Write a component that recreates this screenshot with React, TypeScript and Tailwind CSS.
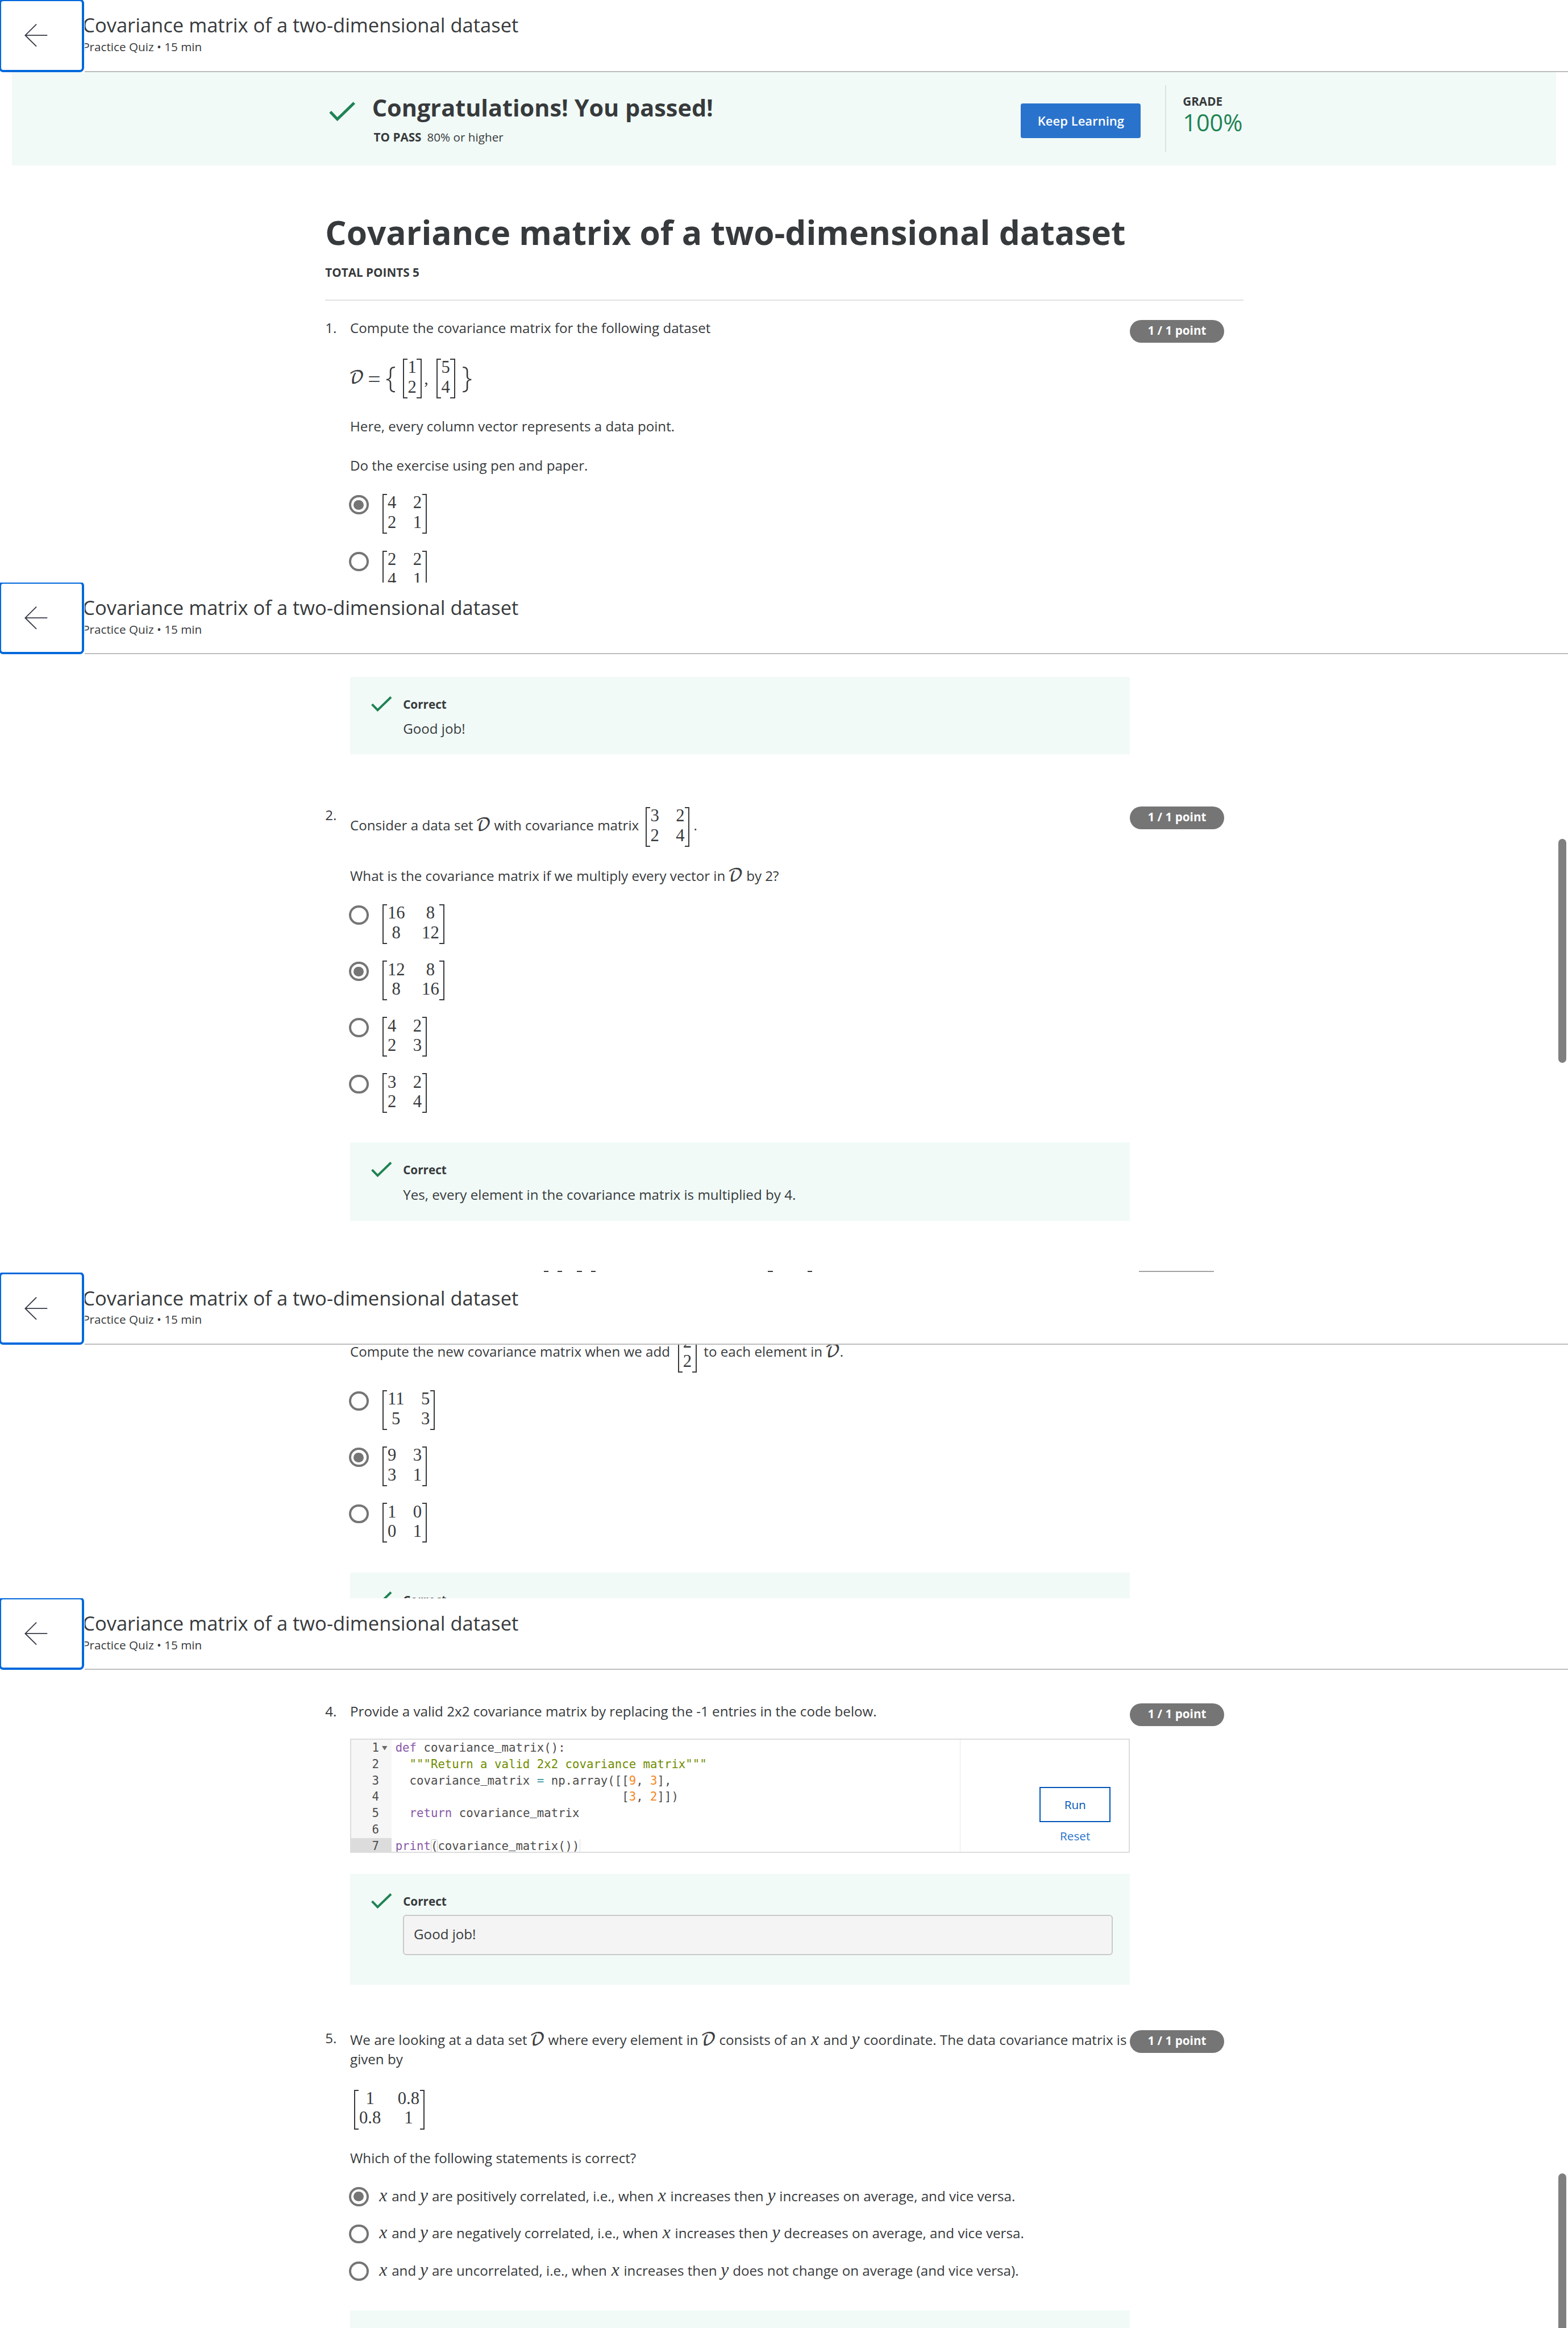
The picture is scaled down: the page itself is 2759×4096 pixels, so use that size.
import type { ReactNode } from "react";

const TITLE = "Covariance matrix of a two-dimensional dataset";

function CheckIcon({ className }: { className: string }) {
  return (
    <svg className={className} viewBox="0 0 48 36" fill="none" stroke="#1f8354" strokeWidth="5.2">
      <path d="M2 18.5 15 32 46 2" />
    </svg>
  );
}

function Header() {
  return (
    <header className="relative z-10 flex h-[66px] w-full bg-white">
      <div className="z-10 h-[66px] w-[77.8px] shrink-0 overflow-hidden bg-white">
        <button className="-ml-px -mt-px flex h-[67px] w-[78px] items-center rounded-[4px] border-[2.1px] border-[#0068dc] pl-[21.5px]">
          <svg className="h-[21px] w-[21px]" viewBox="0 0 42 42" fill="none" stroke="#373a46" strokeWidth="2">
            <path d="M1 21H42M22 .7 1.5 21 22 41.3" />
          </svg>
        </button>
      </div>
      <div className="-ml-[0.8px] flex-1 border-b-[1.1px] border-[#bdbdbd]">
        <div className="-ml-[1.3px] pt-[11.2px]">
          <h2 className="text-[18.02px] leading-[24px]">{TITLE}</h2>
          <p className="-mt-[0.3px] text-[10.8px] leading-[16px]">Practice Quiz • 15 min</p>
        </div>
      </div>
    </header>
  );
}

function Brackets({ children, className = "" }: { children?: ReactNode; className?: string }) {
  return (
    <span className={`flex h-[36.5px] shrink-0 ${className}`}>
      <span className="h-full w-[4.3px] border-y-[1.1px] border-l-[1.1px] border-[#373a3c]" />
      <span className="mx-[0.3px] -mt-[0.9px] block">{children}</span>
      <span className="h-full w-[4.3px] border-y-[1.1px] border-r-[1.1px] border-[#373a3c]" />
    </span>
  );
}

function Matrix({ rows, className = "" }: { rows: string[][]; className?: string }) {
  const single = rows[0].length === 1;
  return (
    <Brackets className={className}>
      <span
        className={`grid gap-x-[15.4px] text-center font-['Liberation_Serif',serif] text-[16px] leading-[18px] ${
          single ? "grid-cols-[auto]" : "grid-cols-[auto_auto]"
        }`}
      >
        {rows.flat().map((v, i) => (
          <span key={i}>{v}</span>
        ))}
      </span>
    </Brackets>
  );
}

function SetD() {
  return (
    <span className="inline-block w-[12.7px] font-['DejaVu_Math_TeX_Gyre','Liberation_Serif',serif] text-[15.2px] leading-[18px] [-webkit-text-stroke:0.25px_#373a3c] [text-indent:-1px]">
      𝒟
    </span>
  );
}

function X() {
  return (
    <span className="inline-block w-[8.9px] text-center font-['Liberation_Serif',serif] text-[16.5px] italic leading-[18px]">x</span>
  );
}

function Y() {
  return (
    <span className="inline-block w-[7.9px] text-center font-['Liberation_Serif',serif] text-[16.5px] italic leading-[18px]">y</span>
  );
}

function Brace({ children, className }: { children: string; className: string }) {
  return (
    <span className={`-mt-[3px] flex w-[12px] justify-center font-['Open_Sans',sans-serif] text-[27px] font-light leading-[28px] ${className}`}>
      {children}
    </span>
  );
}

function Radio({ checked = false, className = "" }: { checked?: boolean; className?: string }) {
  return (
    <span
      className={`-ml-[1.2px] flex h-[17.7px] w-[18.5px] shrink-0 items-center justify-center rounded-full border-[2.1px] border-[#757575] ${className}`}
    >
      {checked && <span className="h-[9px] w-[9.4px] rounded-full bg-[#757575]" />}
    </span>
  );
}

function MatrixOption({ rows, checked }: { rows: string[][]; checked?: boolean }) {
  return (
    <div className="flex h-[36.5px]">
      <Radio checked={checked} className="mt-[1.1px]" />
      <Matrix rows={rows} className="ml-[12.5px]" />
    </div>
  );
}

function TextOption({ children, checked }: { children: ReactNode; checked?: boolean }) {
  return (
    <div className="flex h-5">
      <Radio checked={checked} className="mt-[1.7px]" />
      <Line className="ml-[8.7px]">{children}</Line>
    </div>
  );
}

function Line({ children, className = "" }: { children: ReactNode; className?: string }) {
  return <div className={`flex h-5 items-baseline whitespace-pre leading-5 ${className}`}>{children}</div>;
}

function Feedback({ children, className = "" }: { children?: ReactNode; className?: string }) {
  return (
    <div className={`flex bg-[#f1faf7] pt-[17.3px] ${className}`}>
      <CheckIcon className="ml-[19.3px] mt-[0.3px] h-[14.3px] w-[19.1px] shrink-0" />
      <div className="ml-[10.2px] flex-1">
        <p className="text-[10.8px] font-bold leading-[16px]">Correct</p>
        {children}
      </div>
    </div>
  );
}

function Question({ n, children, className = "" }: { n?: number; children: ReactNode; className?: string }) {
  return (
    <section className={`ml-[298.5px] flex items-start ${className}`}>
      <span className="w-[22.8px] leading-5">{n ? `${n}.` : ""}</span>
      <div className="w-[715.7px]">{children}</div>
      {n && (
        <span className="mt-[2.3px] h-[21px] w-[86.3px] rounded-full bg-[#757575] text-center text-[10.8px] font-bold leading-[19.8px] text-white">
          1 / 1 point
        </span>
      )}
    </section>
  );
}

function Banner() {
  return (
    <div className="mx-[11px] flex h-[86px] bg-[#f1faf7]">
      <CheckIcon className="ml-[291.2px] mt-[27.2px] h-[18px] w-[24.2px]" />
      <div className="ml-[15.1px] w-[595.5px] pt-[19px]">
        <h3 className="text-[21.6px] font-bold leading-[28px]">Congratulations! You passed!</h3>
        <p className="ml-[1.5px] mt-[5px] flex gap-[5.2px] text-[10.8px] leading-[16px]">
          <b>TO PASS</b>
          <span>80% or higher</span>
        </p>
      </div>
      <button className="mt-[29px] h-8 w-[110px] rounded-[2px] bg-[#2a73cc] text-[11.5px] font-semibold text-white">
        Keep Learning
      </button>
      <div className="ml-[22px] mt-[12px] h-[62px] w-[1.04px] bg-[#dfe3e1]" />
      <div className="ml-[15.5px] pt-[18.8px]">
        <p className="text-[10.8px] font-bold leading-[16px]">GRADE</p>
        <p className="text-[21.6px] leading-[23.4px] text-[#1f8354]">100%</p>
      </div>
    </div>
  );
}

/* The underscore of this face sits closer to the baseline, so the last line's stays inside the editor. */
function Name() {
  return (
    <>
      covariance<span className="font-['Liberation_Mono',monospace] leading-[0px]">_</span>matrix
    </>
  );
}

function Code() {
  const kw = "text-[#8959a8]";
  const num = "text-[#f5871f]";
  const lines: ReactNode[] = [
    <>
      <span className={kw}>def</span> <Name />():
    </>,
    <span className="text-[#718c00]">{'  """Return a valid 2x2 covariance matrix"""'}</span>,
    <>
      {"  "}
      <Name /> <span className="text-[#3e999f]">=</span> np.array([[<span className={num}>9</span>,{" "}
      <span className={num}>3</span>],
    </>,
    <>
      {" ".repeat(32)}[<span className={num}>3</span>, <span className={num}>2</span>]])
    </>,
    <>
      {"  "}
      <span className={kw}>return</span> <Name />
    </>,
    "",
    <>
      <span className={kw}>print</span>
      <span className="rounded-[2px] outline outline-[#c8c8c8] -outline-offset-1">(</span>
      <Name />
      ())
      <span className="border-r border-[#ddd]" />
    </>,
  ];
  return (
    <div className="mt-[15px] flex h-[104.75px] overflow-hidden border-[1.1px] border-[#ddd] text-[10.8px]">
      <div className="w-[37px] bg-[#f6f6f6] text-right font-['DejaVu_Sans_Mono',monospace] leading-[15px] text-[#4d4d4c]">
        {lines.map((_, i) => (
          <div key={i} className={`flex h-[15px] items-center justify-end ${i === 6 ? "bg-[#dcdcdc]" : ""}`}>
            {i + 1}
            <span className="flex w-[11.5px] justify-center">
              {i === 0 && (
                <svg className="mr-[1px] h-[4px] w-[5px]" viewBox="0 0 5 4" fill="#6b6b6b">
                  <path d="M0 0H5L2.5 4Z" />
                </svg>
              )}
            </span>
          </div>
        ))}
      </div>
      <div className="w-[522.3px] border-r border-[#e8e8e8] pl-[3.5px] font-['DejaVu_Sans_Mono',monospace] leading-[15px] text-[#4d4d4c]">
        {lines.map((line, i) => (
          <pre key={i} className="h-[15px] font-['DejaVu_Sans_Mono',monospace]">
            {line}
          </pre>
        ))}
      </div>
      <div className="ml-auto mr-[16.8px] mt-[43.4px] flex w-[65px] flex-col">
        <button className="h-[32.2px] border-[1.1px] border-[#0156b8] text-[#0156b8]">Run</button>
        <a className="mt-[4.8px] text-center leading-[16px] text-[#2a73cc]">Reset</a>
      </div>
    </div>
  );
}

export default function App() {
  return (
    <main className="h-[2136.4px] w-[1439px] overflow-hidden bg-white font-['Open_Sans',sans-serif] text-[12.61px] text-[#373a3c] [zoom:1.9173]">
      <div className="h-[534.5px] overflow-hidden">
        <Header />
        <Banner />
        <div className="ml-[298.5px] mt-[40.8px] w-[842.5px] border-b-[1.1px] border-[#e1e1e1] pb-[17.1px]">
          <h1 className="text-[30.6px] font-bold leading-[40px]">{TITLE}</h1>
          <p className="mt-[9.1px] text-[10.8px] font-bold leading-[16px]">TOTAL POINTS 5</p>
        </div>
        <Question n={1} className="mt-[15.2px]">
          <Line>Compute the covariance matrix for the following dataset</Line>
          <div className="mt-[18px] flex h-[36.5px] items-center font-['Liberation_Serif',serif] text-[15.6px]">
            <span className="-mt-[2px]">
              <SetD />
            </span>
            <span className="ml-[3px] w-[13px] text-center font-['Open_Sans',sans-serif] text-[21px] font-light leading-[20px]">
              =
            </span>
            <Brace className="ml-[2.6px]">{"{"}</Brace>
            <Matrix rows={[["1"], ["2"]]} className="ml-[5px]" />
            <span className="w-[13.6px] pl-[2.5px]">,</span>
            <Matrix rows={[["5"], ["4"]]} />
            <Brace className="ml-[5px]">{"}"}</Brace>
          </div>
          <Line className="mt-[15.4px]">Here, every column vector represents a data point.</Line>
          <Line className="mt-4">Do the exercise using pen and paper.</Line>
          <div className="mt-[16.2px] flex flex-col gap-[15.5px]">
            <MatrixOption checked rows={[["4", "2"], ["2", "1"]]} />
            <MatrixOption rows={[["2", "2"], ["4", "1"]]} />
          </div>
        </Question>
      </div>

      <div className="relative h-[633.5px] overflow-hidden">
        <Header />
        <Feedback className="ml-[321.3px] mt-[20.8px] h-[71px] w-[715.7px]">
          <p className="mt-[4.2px] leading-5">Good job!</p>
        </Feedback>
        <Question n={2} className="mt-[45.5px]">
          <Line className="mt-[9.4px]">
            {"Consider a data set "}
            <SetD />
            {" with covariance matrix"}
            <Matrix rows={[["3", "2"], ["2", "4"]]} className="-mt-[6.6px] ml-[6px] mr-[3.7px] self-start" />.
          </Line>
          <Line className="mt-[26.4px]">
            {"What is the covariance matrix if we multiply every vector in "}
            <SetD />
            {" by 2?"}
          </Line>
          <div className="mt-[16.3px] flex flex-col gap-[15.2px]">
            <MatrixOption rows={[["16", "8"], ["8", "12"]]} />
            <MatrixOption checked rows={[["12", "8"], ["8", "16"]]} />
            <MatrixOption rows={[["4", "2"], ["2", "3"]]} />
            <MatrixOption rows={[["3", "2"], ["2", "4"]]} />
          </div>
          <Feedback className="mt-[26.8px] h-[72px]">
            <p className="mt-[5px] leading-5">Yes, every element in the covariance matrix is multiplied by 4.</p>
          </Feedback>
        </Question>
        <div className="mt-[45.9px] flex h-[1.2px] items-start overflow-hidden pl-[498.900px]">
          <Brackets className="w-[17px] justify-between" />
          <Brackets className="ml-[13.7px] w-[17px] justify-between" />
          <Brackets className="ml-[158.3px] w-[40.4px] justify-between" />
          <span className="ml-[300px] h-[2px] w-[69px] bg-[#a3a3a3]" />
        </div>
        <div className="absolute right-[1.7px] top-[235.5px] h-[205.5px] w-[7.3px] rounded-full bg-[#7f7f7f]" />
      </div>

      <div className="h-[298.5px] overflow-hidden">
        <Header />
        <Question className="-mt-[3.7px]">
          <Line>
            {"Compute the new covariance matrix when we add"}
            <Matrix rows={[["2"], ["2"]]} className="-mt-[7px] ml-[7.2px] mr-[3.3px] self-start" />
            {" to each element in "}
            <SetD />.
          </Line>
          <div className="mt-[25.4px] flex flex-col gap-[15.3px]">
            <MatrixOption rows={[["11", "5"], ["5", "3"]]} />
            <MatrixOption checked rows={[["9", "3"], ["3", "1"]]} />
            <MatrixOption rows={[["1", "0"], ["0", "1"]]} />
          </div>
          <Feedback className="mt-[27.2px] h-[72px]" />
        </Question>
      </div>

      <div className="relative h-[669.9px] overflow-hidden">
        <Header />
        <Question n={4} className="mt-[28.1px]">
          <Line>Provide a valid 2x2 covariance matrix by replacing the -1 entries in the code below.</Line>
          <Code />
          <Feedback className="mt-[19.2px] h-[101.8px]">
            <p className="mr-[16px] mt-[4.4px] h-[37px] rounded-[3px] border-[1.1px] border-[#cacaca] bg-[#f4f4f4] pl-[8.8px] leading-[33px]">
              Good job!
            </p>
          </Feedback>
        </Question>
        <Question n={5} className="mt-[39.3px]">
          <Line className="mt-[2.1px] h-[18px] leading-[18px]">
            {"We are looking at a data set "}
            <SetD />
            {" where every element in "}
            <SetD />
            {" consists of an "}
            <X />
            {" and "}
            <Y />
            {" coordinate. The data covariance matrix is"}
          </Line>
          <p className="leading-[18px]">given by</p>
          <Matrix rows={[["1", "0.8"], ["0.8", "1"]]} className="ml-[3.7px] mt-[18.9px]" />
          <Line className="mt-[16.6px]">Which of the following statements is correct?</Line>
          <div className="mt-[14.5px] flex flex-col gap-[14.3px]">
            <TextOption checked>
              <X />
              {" and "}
              <Y />
              {" are positively correlated, i.e., when "}
              <X />
              {" increases then "}
              <Y />
              {" increases on average, and vice versa."}
            </TextOption>
            <TextOption>
              <X />
              {" and "}
              <Y />
              {" are negatively correlated, i.e., when "}
              <X />
              {" increases then "}
              <Y />
              {" decreases on average, and vice versa."}
            </TextOption>
            <TextOption>
              <X />
              {" and "}
              <Y />
              {" are uncorrelated, i.e., when "}
              <X />
              {" increases then "}
              <Y />
              {" does not change on average (and vice versa)."}
            </TextOption>
          </div>
          <Feedback className="mt-[26.5px] h-[72px]" />
        </Question>
        <div className="absolute -bottom-2 right-[1.7px] top-[527.9px] w-[7.3px] rounded-full bg-[#7f7f7f]" />
      </div>
    </main>
  );
}
